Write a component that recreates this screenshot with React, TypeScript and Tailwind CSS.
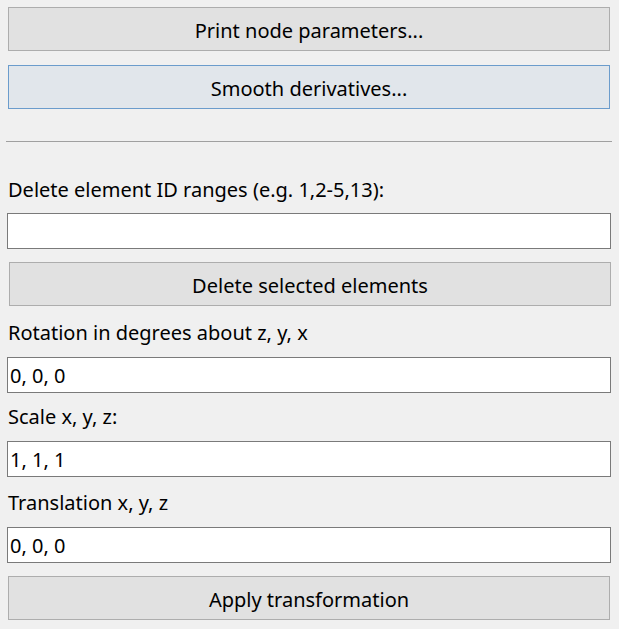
const font = { fontFamily: '"Noto Sans", "Open Sans", sans-serif' };

function Button({ label, focused }: { label: string; focused?: boolean }) {
  return (
    <button
      className={
        focused
          ? "h-[44px] w-[602px] ml-px pt-[3px] border border-[#6b9ccc] bg-[#e1e6eb] text-[20px] text-black"
          : "h-[44px] w-[602px] ml-px pt-[3px] border border-[#adadad] bg-[#e1e1e1] text-[20px] text-black"
      }
    >
      {label}
    </button>
  );
}

function Field({ value }: { value: string }) {
  return (
    <input
      readOnly
      value={value}
      className="h-[36px] w-[604px] border border-[#7a7a7a] bg-white px-[2px] text-[20px] text-black outline-none"
    />
  );
}

function Label({ text }: { text: string }) {
  return <div className="ml-px h-[26px] leading-[26px] text-[20px] text-black">{text}</div>;
}

export default function App() {
  return (
    <div className="h-[629px] w-[619px] bg-[#f0f0f0] pl-[7px] pt-[7px]" style={font}>
      <Button label="Print node parameters..." />
      <div className="mt-[14px]">
        <Button label="Smooth derivatives..." focused />
      </div>
      <div className="mt-[32px] -ml-px h-px w-[606px] bg-[#a0a0a0]" />
      <div className="mt-[35px]">
        <Label text="Delete element ID ranges (e.g. 1,2-5,13):" />
      </div>
      <div className="mt-[10px]">
        <Field value="" />
      </div>
      <div className="mt-[13px] ml-px">
        <Button label="Delete selected elements" />
      </div>
      <div className="mt-[14px]">
        <Label text="Rotation in degrees about z, y, x" />
      </div>
      <div className="mt-[11px]">
        <Field value="0, 0, 0" />
      </div>
      <div className="mt-[11px]">
        <Label text="Scale x, y, z:" />
      </div>
      <div className="mt-[11px]">
        <Field value="1, 1, 1" />
      </div>
      <div className="mt-[13px]">
        <Label text="Translation x, y, z" />
      </div>
      <div className="mt-[11px]">
        <Field value="0, 0, 0" />
      </div>
      <div className="mt-[13px]">
        <Button label="Apply transformation" />
      </div>
    </div>
  );
}
